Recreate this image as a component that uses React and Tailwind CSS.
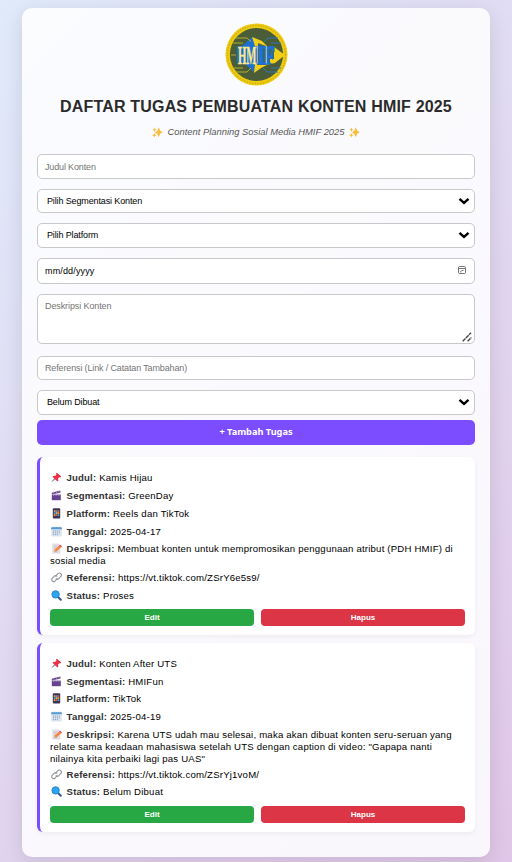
import React from "react";

const ARIAL = "font-['Liberation_Sans',Arial,sans-serif]";

function Logo() {
  return (
    <svg viewBox="0 0 63 63" className="h-[63px] w-[63px]">
      <circle cx="31.5" cy="31.5" r="31" fill="#f0cb10" />
      <circle cx="31.5" cy="31.5" r="29" fill="none" stroke="#8c8424" strokeWidth="1.4" strokeDasharray="1.4 1.3" opacity="0.4" />
      <circle cx="31.5" cy="31.5" r="26.600" fill="#4b5d38" />
      <path d="M27 14 17 23H12v18h8l9 8 4-6V20z" fill="#1d6fd0" />
      <path d="M27 14l10 4 5 5H30zM30 41h14l-8 4-7 5z" fill="#f3d018" />
      <path d="M33 20l8 3h9l2 3 6 5-9 9-9 2h-8z" fill="#3c6a72" />
      <path d="M49 24l11 8-10 8-5 1v-5h4z" fill="#f3d018" />
      <g fill="none" stroke="#b5ad2b" strokeWidth="1">
        <path d="M10 15h12l4 3.500M7 20h11M6 32h5M7 45h11M11 49h11l4-4" />
      </g>
      <g fill="none" stroke="#2b78b8" strokeWidth="1">
        <path d="M53 15H43l-4 4M56 20H46M56 45H46M53 49H42l-4-4" />
      </g>
      <g fontFamily="Liberation Serif, serif" fontWeight="700" fontSize="26">
        <text x="13" y="40.500" textLength="18.500" lengthAdjust="spacingAndGlyphs" fill="#fbe98c" stroke="#fbe98c" strokeWidth=".5">HM</text>
        <text x="33" y="40.500" textLength="17" lengthAdjust="spacingAndGlyphs" fill="#1a72dd" stroke="#1a72dd" strokeWidth=".8">IF</text>
      </g>
      <path d="M32.300 23v17.500M41.300 23v17.500" stroke="#dbe3b4" strokeWidth=".8" />
    </svg>
  );
}

function Sparkles() {
  return (
    <svg viewBox="0 0 11 11" className="inline-block h-[11px] w-[11px]" fill="#f9bd3d">
      <path d="M6.800.3l1.300 3.300 2.600 1.700-2.600 1.500L6.800 10.300 5.300 6.900 3 5.500l2.300-1.700zM2.500.6l.6 1.500 1.300.6-1.300.7-.6 1.500L1.900 3.400.6 2.700l1.300-.6zM2.300 5.900l.7 1.600 1.500.7-1.500.7-.7 1.600-.7-1.600L.1 8.200l1.500-.7z" />
    </svg>
  );
}

const icons = {
  pin: (
    <>
      <path d="M.8 9.6 4.4 5.4l1 1z" fill="#8796a5" stroke="#8796a5" strokeWidth=".6" />
      <path d="M5.5.8 10.300 4.600 9.100 5.500 8.300 5.300 7 6.800l.3 2-.9.6L1.500 4.800l.8-.9 2-.1 1.200-1.300-.5-.9z" fill="#ef3049" />
      <path d="M6 1.700 9.200 4.400" stroke="#b91f3a" strokeWidth=".7" />
    </>
  ),
  clap: (
    <>
      <path d="M.8 4.600h9v5.600h-9z" fill="#66428f" />
      <path d="M.6 2.700 9.200.5l.5 1.900L1.100 4.600z" fill="#66428f" />
      <path d="m2 2.400 1.600 1.300M4.600 1.600 6.200 3M7.200 1l1.500 1.200M1.800 4.800 3 6M4.500 4.800l1.100 1.200M7.200 4.800l1.100 1.200" stroke="#c2b5d2" strokeWidth=".7" />
    </>
  ),
  phone: (
    <>
      <rect x="1.800" y=".3" width="7.400" height="10.300" rx="1" fill="#3b3554" />
      <path d="M2.800 2.200h1.700v1.700H2.800zM6.500 4.200h1.700v1.700H6.500zM2.800 6.200h1.700v1.700H2.800z" fill="#f1a33b" />
      <path d="M4.700 2.200h1.600v1.700H4.700zM2.800 4.200h1.700v1.700H2.800zM6.500 6.200h1.700v1.700H6.500z" fill="#3aa5e8" />
      <path d="M6.500 2.200h1.700v1.700H6.500zM4.700 6.200h1.600v1.700H4.700z" fill="#e65a4e" />
      <path d="M4.700 4.200h1.600v1.700H4.700z" fill="#f5c04a" />
    </>
  ),
  calendar: (
    <>
      <rect x=".2" y="1.100" width="10.600" height="9.300" rx="1.200" fill="#dbe5f2" />
      <path d="M.2 3.300v-1q0-1.200 1.200-1.200h8.200q1.200 0 1.200 1.200v1z" fill="#5a9ad4" />
      <path d="M2 .4v1.500M4.300.4v1.500M6.700.4v1.500M9 .4v1.500" stroke="#b5c8da" strokeWidth=".7" />
      <path d="M2 5h7.400M2 6.800h7.400M2 8.600h5" stroke="#7d90ae" strokeWidth=".9" strokeDasharray="1 .9" />
    </>
  ),
  memo: (
    <>
      <path d="M1.300.5h6.400L9.500 2.300v8.200H1.300z" fill="#e3dde8" />
      <path d="M2.700 3h3.500M2.700 4.800h2.500M2.700 8.800h4" stroke="#b7afc2" strokeWidth=".6" />
      <path d="m3.300 8.800.6-2.500 4.200-3.900 1.900 2-4.300 3.800z" fill="#f3883a" />
      <path d="m8.100 2.400.9-.8 2 2-1 .9z" fill="#e6405c" />
      <path d="m3.300 8.800.6-2.500 1.800 1.900z" fill="#dba778" />
    </>
  ),
  link: (
    <g fill="none" stroke="#91979e" strokeWidth="1.100" strokeLinecap="round">
      <path d="M4.700 4.200 6.900 1.700a2 2 0 0 1 2.900 2.800L7.700 6.800A1.900 1.900 0 0 1 5.200 6.900" />
      <path d="M6.200 6.700 4 9.200A2 2 0 0 1 1.200 6.400L3.300 4.200a1.900 1.900 0 0 1 2.600-.1" />
    </g>
  ),
  search: (
    <>
      <path d="m7 7 2.800 2.800" stroke="#33588b" strokeWidth="2" strokeLinecap="round" />
      <circle cx="4.600" cy="4.400" r="3.700" fill="#2aa5ef" stroke="#2b80c6" strokeWidth=".9" />
    </>
  ),
};

const fields = [
  ["pin", "Judul"],
  ["clap", "Segmentasi"],
  ["phone", "Platform"],
  ["calendar", "Tanggal"],
  ["memo", "Deskripsi"],
  ["link", "Referensi"],
  ["search", "Status"],
];

function Chevron() {
  return (
    <svg viewBox="0 0 12 8" className="mr-[4px] mb-[1px] h-[8px] w-[12px]" fill="none">
      <path d="M1.500 1.800 6 5.800l4.500-4" stroke="#000" strokeWidth="2.400" />
    </svg>
  );
}

const box = "flex shrink-0 items-center justify-between rounded-[5px] border border-[#c8c8c8] bg-white text-[9px]";

function Select({ className, children }) {
  return (
    <div className={`${box} pl-[9px] tracking-[-0.13px] text-black ${className}`}>
      <span className="pt-[1px]">{children}</span>
      <Chevron />
    </div>
  );
}

function Task({ values, heights, className }) {
  return (
    <section className={`flex shrink-0 flex-col rounded-[6px] border-l-[3px] border-[#7c4dff] bg-white pr-[10px] pl-[10px] shadow-[0_2px_5px_rgba(0,0,0,0.05)] ${className}`}>
      {fields.map(([icon, label], i) => {
        const [first, ...rest] = values[i].split("\n");
        return (
          <div key={label} className="text-[9.6px] leading-[11.8px] tracking-[0.2px] whitespace-nowrap text-black" style={{ height: heights[i] }}>
            <p>
              <svg viewBox="0 0 11 11" className="mr-[4.6px] ml-[1px] inline-block h-[11px] w-[11px] align-[-2px]">{icons[icon]}</svg>
              <b className="tracking-[0.15px] text-[#333]">{label}:</b> {first}
            </p>
            {rest.map((line) => (
              <p key={line}>{line}</p>
            ))}
          </div>
        );
      })}
      <div className="flex gap-[7px] text-[8px] font-bold text-white">
        <button className="h-[17px] flex-1 rounded-[4px] bg-[#28a745]">Edit</button>
        <button className="h-[17px] flex-1 rounded-[4px] bg-[#dc3545]">Hapus</button>
      </div>
    </section>
  );
}

export default function App() {
  return (
    <div className={`h-[862px] w-[512px] overflow-hidden bg-linear-135 from-[#e0eafa] to-[#e0c6e8] px-[22px] pt-[8px] ${ARIAL}`}>
      <main className="flex h-[849px] flex-col rounded-[10px] bg-white/85 px-[15px] pt-[15px] shadow-[0_5px_20px_rgba(0,0,0,0.11)]">
        <div className="flex h-[63px] justify-center">
          <Logo />
        </div>
        <h1 className="mt-[9px] h-[24px] text-center text-[16px] leading-[24px] font-bold tracking-[0.18px] whitespace-nowrap text-[#2b2b2b]">
          DAFTAR TUGAS PEMBUATAN KONTEN HMIF 2025
        </h1>
        <p className="mt-[7px] flex h-[12px] items-center justify-center gap-[4px] text-[9.4px] whitespace-nowrap text-[#555] italic">
          <Sparkles />
          <span>Content Planning Sosial Media HMIF 2025</span>
          <Sparkles />
        </p>
        <div className={`${box} mt-[16px] h-[25px] pl-[7px] tracking-[-0.15px] text-[#757575]`}>
          <span className="pt-[2px]">Judul Konten</span>
        </div>
        <Select className="mt-[10px] h-[24px]">Pilih Segmentasi Konten</Select>
        <Select className="mt-[10px] h-[25px]">Pilih Platform</Select>
        <div className={`${box} mt-[10px] h-[26px] pr-[8px] pl-[7px] tracking-[0.15px] text-black`}>
          <span className="pt-[1px]">mm/dd/yyyy</span>
          <svg viewBox="0 0 8 8" className="mb-[2px] h-[8px] w-[8px]" fill="none" stroke="#555" strokeWidth=".8">
            <rect x=".5" y=".5" width="7" height="7" rx="1.200" />
            <path d="M.5 2.500h7M3.500 4.500h2M2 5.800h1.500" />
          </svg>
        </div>
        <div className={`${box} mt-[10px] h-[50px] pl-[7px] tracking-[-0.1px] text-[#757575]`}>
          <span className="mt-[5px] self-start">Deskripsi Konten</span>
          <svg viewBox="0 0 10 10" className="mr-[2px] mb-[1px] h-[10px] w-[10px] self-end" stroke="#444" strokeWidth="1.400">
            <path d="M.7 9.300 9 .8M5.600 9.300l3.800-3.800" strokeDasharray="4 .5" />
          </svg>
        </div>
        <div className={`${box} mt-[12px] h-[24px] pl-[7px] tracking-[-0.14px] text-[#757575]`}>
          <span className="pt-[1px]">Referensi (Link / Catatan Tambahan)</span>
        </div>
        <Select className="mt-[10px] h-[25px]">Belum Dibuat</Select>
        <button className="mt-[5px] h-[25px] shrink-0 rounded-[5px] bg-[#7c4dff] pb-[2px] font-['Noto_Sans',sans-serif] text-[9.2px] font-bold text-white">
          + Tambah Tugas
        </button>
        <Task
          className="mt-[12px] h-[178px] pt-[15px]"
          heights={[18, 18, 18, 17, 29, 18, 19]}
          values={[
            "Kamis Hijau",
            "GreenDay",
            "Reels dan TikTok",
            "2025-04-17",
            "Membuat konten untuk mempromosikan penggunaan atribut (PDH HMIF) di\nsosial media",
            "https://vt.tiktok.com/ZSrY6e5s9/",
            "Proses",
          ]}
        />
        <Task
          className="mt-[8px] h-[189px] pt-[15px]"
          heights={[18, 17, 18, 18, 40, 17, 20]}
          values={[
            "Konten After UTS",
            "HMIFun",
            "TikTok",
            "2025-04-19",
            "Karena UTS udah mau selesai, maka akan dibuat konten seru-seruan yang\nrelate sama keadaan mahasiswa setelah UTS dengan caption di video: \"Gapapa nanti\nnilainya kita perbaiki lagi pas UAS\"",
            "https://vt.tiktok.com/ZSrYj1voM/",
            "Belum Dibuat",
          ]}
        />
      </main>
    </div>
  );
}
